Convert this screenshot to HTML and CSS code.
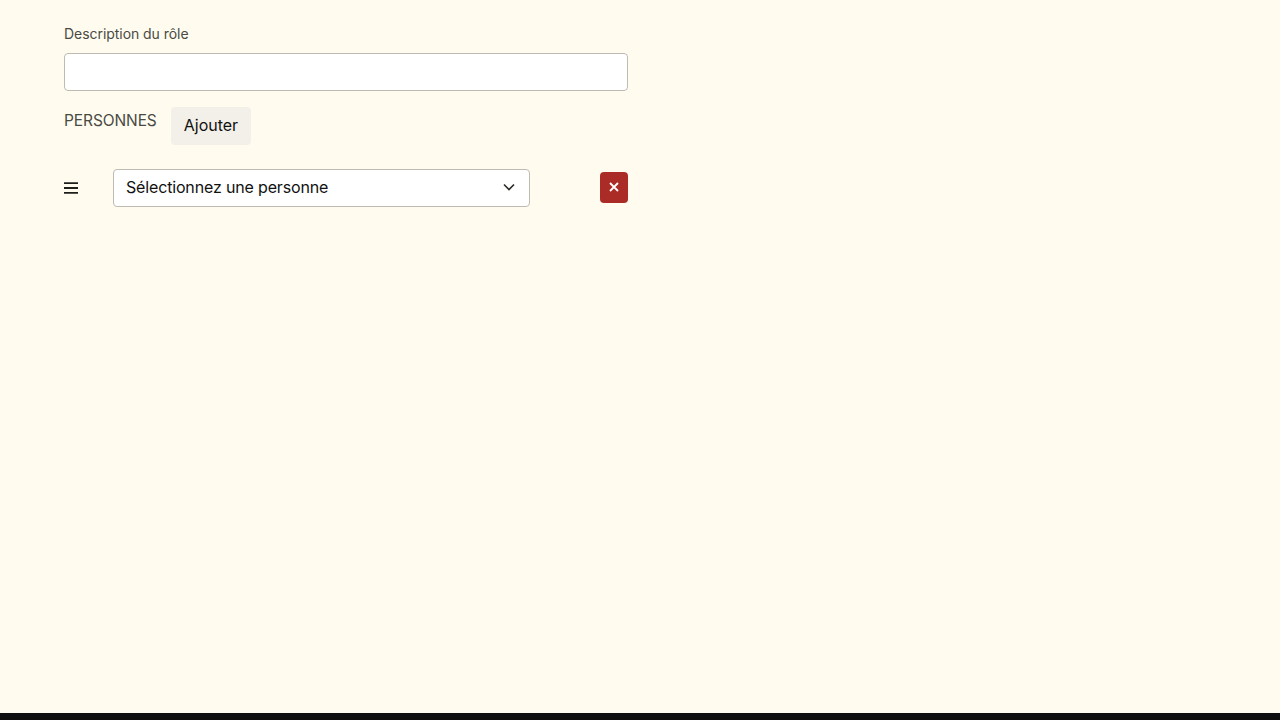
FILE: index.html
```html
<!DOCTYPE html>
<html lang="fr">
<head>
<meta charset="utf-8">
<title>Rôle</title>
<link rel="stylesheet" href="styles.css">
</head>
<body>
<main class="page">
  <form class="form">
    <label class="label" for="desc">Description du rôle</label>
    <input class="input" id="desc" type="text">
    <div class="people-head">
      <span class="people-title">PERSONNES</span>
      <button class="add" type="button">Ajouter</button>
    </div>
    <div class="person">
      <span class="handle">
        <svg width="14" height="12" viewBox="0 0 14 12" aria-hidden="true"><path d="M0 1.2h14M0 6h14M0 10.8h14" stroke="#1f1f1c" stroke-width="1.8" fill="none"/></svg>
      </span>
      <div class="select">
        <span class="select-text">Sélectionnez une personne</span>
        <svg class="chev" width="12" height="8" viewBox="0 0 12 8" aria-hidden="true"><path d="M1 1.5l5 5 5-5" stroke="#2a2a27" stroke-width="1.6" fill="none"/></svg>
      </div>
      <button class="remove" type="button" aria-label="Supprimer">
        <svg width="10" height="10" viewBox="0 0 10 10" aria-hidden="true"><path d="M1 1l8 8M9 1l-8 8" stroke="#fff" stroke-width="1.8" fill="none"/></svg>
      </button>
    </div>
  </form>
</main>
<footer class="bar"></footer>
</body>
</html>
```

FILE: styles.css
```css
* { box-sizing: border-box; }
html, body { margin: 0; height: 100%; }
body {
  display: flex;
  flex-direction: column;
  background: #fffcef;
  color: #111;
  font-family: Inter, "Liberation Sans", sans-serif;
}
.page { flex: 1; padding: 24px 64px 0; }
.form { width: 564px; display: flex; flex-direction: column; }
.label { font-size: 14px; line-height: 20px; color: #4a4a45; margin-bottom: 9px; letter-spacing: -0.05px; }
.input {
  height: 38px;
  border: 1px solid #bdbbb2;
  border-radius: 4px;
  background: #fff;
  outline: none;
}
.people-head { display: flex; align-items: flex-start; gap: 14px; margin-top: 16px; }
.people-title { font-size: 15.5px; line-height: 28px; color: #4a4a45; letter-spacing: -0.1px; }
.add {
  height: 38px;
  padding: 0 13px 2px;
  border: 0;
  border-radius: 4px;
  background: #f2f0e8;
  color: #111;
  font: inherit;
  font-size: 16px;
}
.person { display: flex; align-items: center; margin-top: 24px; }
.handle { width: 49px; display: flex; align-items: center; }
.select {
  width: 417px;
  height: 38px;
  padding: 0 14px 2px 12px;
  display: flex;
  align-items: center;
  justify-content: space-between;
  border: 1px solid #bdbbb2;
  border-radius: 4px;
  background: #fff;
  font-size: 16px;
}
.select-text { letter-spacing: -0.16px; }
.remove {
  width: 28px;
  height: 31px;
  margin-left: auto;
  margin-top: -2px;
  padding: 0;
  display: flex;
  align-items: center;
  justify-content: center;
  border: 0;
  border-radius: 4px;
  background: #ab2b26;
}
.bar { height: 7px; background: #0e0e0e; }
```
